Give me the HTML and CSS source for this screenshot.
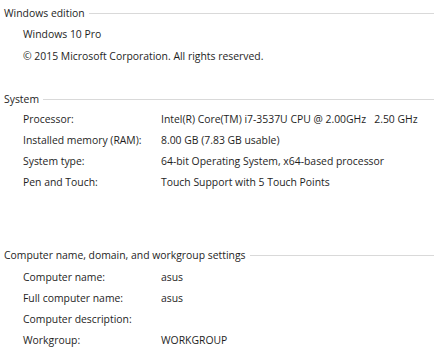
FILE: index.html
```html
<!DOCTYPE html>
<html lang="en">
<head>
  <meta charset="UTF-8">
  <meta name="viewport" content="width=device-width, initial-scale=1.0">
  <title>System</title>
  <link rel="stylesheet" href="styles.css">
</head>
<body>
  <div class="group edition">
    <div class="group-title"><span>Windows edition</span></div>
    <div class="line">Windows 10 Pro</div>
    <div class="line">© 2015 Microsoft Corporation. All rights reserved.</div>
  </div>

  <div class="group system">
    <div class="group-title"><span>System</span></div>
    <div class="row"><span class="label">Processor:</span><span class="value">Intel(R) Core(TM) i7-3537U CPU @ 2.00GHz&nbsp;&nbsp; 2.50 GHz</span></div>
    <div class="row"><span class="label">Installed memory (RAM):</span><span class="value">8.00 GB (7.83 GB usable)</span></div>
    <div class="row"><span class="label">System type:</span><span class="value">64-bit Operating System, x64-based processor</span></div>
    <div class="row"><span class="label">Pen and Touch:</span><span class="value">Touch Support with 5 Touch Points</span></div>
  </div>

  <div class="group computer">
    <div class="group-title"><span>Computer name, domain, and workgroup settings</span></div>
    <div class="row first"><span class="label">Computer name:</span><span class="value">asus</span></div>
    <div class="row"><span class="label">Full computer name:</span><span class="value">asus</span></div>
    <div class="row"><span class="label">Computer description:</span><span class="value"></span></div>
    <div class="row"><span class="label">Workgroup:</span><span class="value">WORKGROUP</span></div>
  </div>
</body>
</html>
```

FILE: styles.css
```css
body {
  margin: 0;
  background-color: #fff;
  color: #1e1e1e;
  font-family: "Open Sans", "Noto Sans", sans-serif;
  font-size: 10.4px;
  overflow: hidden;
}
.group-title {
  display: flex;
  align-items: center;
  height: 21px;
  padding-left: 4px;
}
.group-title::after {
  content: "";
  flex: 1;
  height: 1px;
  margin-left: 4px;
  margin-top: 2px;
  background-color: #d9d9d9;
}
.edition {
  margin-top: 2px;
}
.edition .line {
  height: 22px;
  line-height: 22px;
  padding-left: 23px;
}
.system {
  margin-top: 21px;
}
.computer {
  margin-top: 51px;
}
.row {
  display: flex;
  height: 21px;
  line-height: 21px;
  padding-left: 23px;
  white-space: nowrap;
}
.row.first {
  margin-top: 2px;
}
.label {
  width: 138px;
}
```
